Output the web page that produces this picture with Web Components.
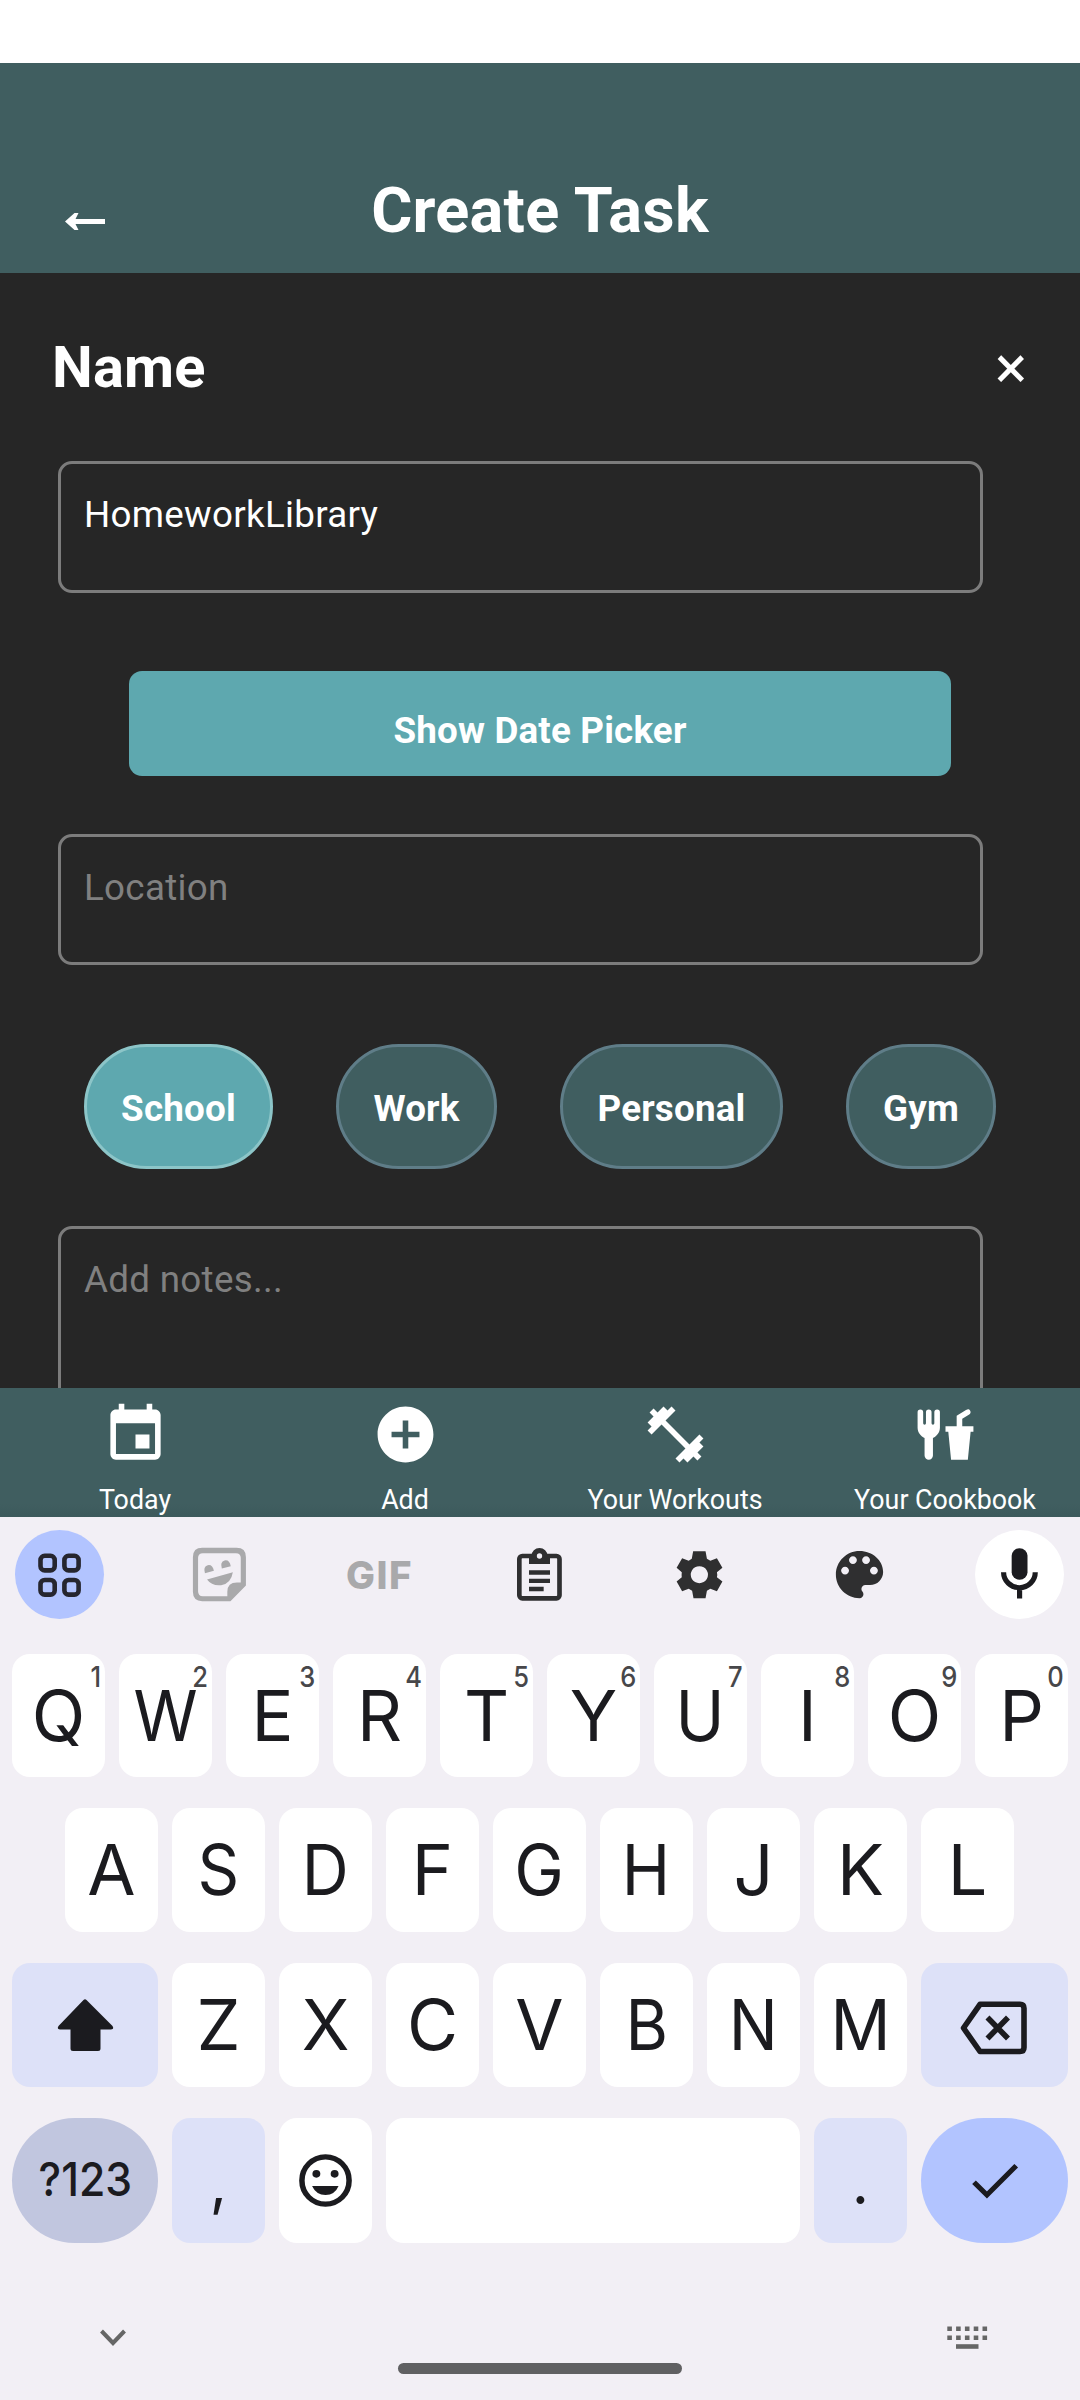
<!DOCTYPE html>
<html lang="en">
<head>
<meta charset="utf-8">
<title>Create Task</title>
<style>
html,body{margin:0;padding:0;background:#fff}
body{width:1080px;height:2400px;overflow:hidden;font-family:Roboto,sans-serif}
</style>
</head>
<body>
<task-screen></task-screen>
<script>
const define = (name, html, setup) => customElements.define(name, class extends HTMLElement {
  connectedCallback() {
    if (this.shadowRoot) return;
    const root = this.attachShadow({mode: 'open'});
    const t = document.createElement('template');
    t.innerHTML = html;
    root.append(t.content.cloneNode(true));
    if (setup) setup(this, root);
  }
});

define('app-header', `
<style>
:host{display:grid;grid-template-columns:170px 1fr 170px;height:210px;box-sizing:border-box;padding-top:110px;background:#405e60;color:#fff}
svg{display:block;margin:38px 0 0 65px}
h1{margin:0;font-size:63px;line-height:75px;font-weight:700;text-align:center;white-space:nowrap;letter-spacing:.25px}
</style>
<svg width="40" height="20" viewBox="0 0 40 20" role="img" aria-label="Back"><path fill="#fff" d="M0 10.5 9.5 2H13.5L10.5 8H40V13H10.5L13.5 19H9.5Z"/></svg>
<h1><slot></slot></h1>`);

define('text-field', `
<style>
:host{display:block;box-sizing:border-box;width:925px;height:var(--h,132px);margin-left:58px;flex:none;border:3px solid #7c7c7c;border-radius:14px;padding:29px 21px 0 23px;font-size:36.75px;letter-spacing:.3px;line-height:43px;color:#fff}
:host([empty]){color:#808080}
</style><slot></slot>`);

define('primary-button', `
<style>
:host{display:flex;align-items:center;justify-content:center;box-sizing:border-box;width:822px;height:105px;margin-left:129px;flex:none;padding-top:14px;background:#5ea8af;border-radius:13px;color:#fff;font-weight:700;font-size:36.75px;letter-spacing:.18px;line-height:43px}
</style><slot></slot>`);

define('category-chip', `
<style>
:host{display:flex;align-items:center;justify-content:center;box-sizing:border-box;width:var(--w);height:125px;padding-top:4px;background:#405e60;border:3px solid #5f7d88;border-radius:63px;color:#fff;font-weight:700;font-size:36.75px;letter-spacing:.2px;line-height:43px}
:host([selected]){background:#5ea8af;border-color:#8cc5c8}
</style><slot></slot>`);

define('task-form', `
<style>
:host{display:flex;flex-direction:column;height:1115px;box-sizing:border-box;padding-top:60px;background:#262626;overflow:hidden}
.title{display:flex;justify-content:space-between;align-items:center;height:68px;flex:none;padding:0 53px 0 52px;margin-bottom:60px;color:#fff}
h2{margin:0;font-size:57.75px;line-height:68px;font-weight:700;letter-spacing:.2px}
.close{font-size:60px;line-height:68px;font-weight:400;margin-top:1px}
.chips{display:flex;gap:63px;padding-left:84px;flex:none;margin:79px 0 57px}
primary-button{margin-top:78px;margin-bottom:58px}
</style>
<div class="title"><h2>Name</h2><span class="close">×</span></div>
<text-field>HomeworkLibrary</text-field>
<primary-button>Show Date Picker</primary-button>
<text-field empty style="--h:131px">Location</text-field>
<div class="chips">
<category-chip selected style="--w:189px">School</category-chip>
<category-chip style="--w:161px">Work</category-chip>
<category-chip style="--w:223px">Personal</category-chip>
<category-chip style="--w:150px">Gym</category-chip>
</div>
<text-field empty style="--h:262px">Add notes...</text-field>`);

const navIcons = {
  today: 'M17 12h-5v5h5v-5zM16 1v2H8V1H6v2H5c-1.11 0-1.99.9-1.99 2L3 19c0 1.1.89 2 2 2h14c1.1 0 2-.9 2-2V5c0-1.1-.9-2-2-2h-1V1h-2zm3 18H5V8h14v11z',
  add: 'M12 2C6.48 2 2 6.48 2 12s4.48 10 10 10 10-4.48 10-10S17.52 2 12 2zm5 11h-4v4h-2v-4H7v-2h4V7h2v4h4v2z',
  workouts: 'M20.57 14.86L22 13.43 20.57 12 17 15.57 8.43 7 12 3.43 10.57 2 9.14 3.43 7.71 2 5.57 4.14 4.14 2.71 2.71 4.14l1.43 1.43L2 7.71l1.43 1.43L2 10.57 3.43 12 7 8.43 15.57 17 12 20.57 13.43 22l1.43-1.43L16.29 22l2.14-2.14 1.43 1.43 1.43-1.43-1.43-1.43L22 16.29z',
  cookbook: 'M3,3A1,1 0 0,0 2,4V8L2,9.5C2,11.19 3.03,12.63 4.5,13.22V19.5A1.5,1.5 0 0,0 6,21A1.5,1.5 0 0,0 7.5,19.5V13.22C8.97,12.63 10,11.19 10,9.5V8L10,4A1,1 0 0,0 9,3A1,1 0 0,0 8,4V8A0.5,0.5 0 0,1 7.5,8.5A0.5,0.5 0 0,1 7,8V4A1,1 0 0,0 6,3A1,1 0 0,0 5,4V8A0.5,0.5 0 0,1 4.5,8.5A0.5,0.5 0 0,1 4,8V4A1,1 0 0,0 3,3M19.88,3C19.75,3 19.62,3.09 19.5,3.16L16,5.25V9H12V11H13L14,21H20L21,11H22V9H18V6.34L20.5,4.84C21,4.56 21.13,4 20.84,3.5C20.63,3.14 20.26,2.95 19.88,3Z'
};
define('nav-item', `
<style>
:host{display:flex;flex-direction:column;align-items:center;flex:1;padding-top:12.5px;color:#fff;font-size:26.8px;line-height:32px;white-space:nowrap}
svg{display:block;margin-bottom:16px}
</style>
<svg width="67" height="67" viewBox="0 0 24 24"><path fill="#fff"/></svg><span><slot></slot></span>`,
(el, root) => root.querySelector('path').setAttribute('d', navIcons[el.getAttribute('icon')]));

define('bottom-nav', `
<style>
:host{display:flex;height:129px;background:linear-gradient(#405e60 0,#405e60 116px,#3c595b 129px)}
</style>
<nav-item icon="today">Today</nav-item>
<nav-item icon="add">Add</nav-item>
<nav-item icon="workouts">Your Workouts</nav-item>
<nav-item icon="cookbook">Your Cookbook</nav-item>`);

define('tool-button', `
<style>
:host{display:flex;align-items:center;justify-content:center;width:89px;height:89px;border-radius:50%;background:var(--bg,none);color:#a9a9ab;font:800 38.5px/46px Inter,sans-serif;letter-spacing:1.5px}
</style><slot></slot>`);

define('key-toolbar', `
<style>
:host{display:flex;justify-content:space-between;padding:13px 16px 35px 15px}
svg{display:block}
</style>
<tool-button style="--bg:#b2c4ff">
 <svg width="89" height="89" viewBox="0 0 89 89" fill="none" stroke="#26262f" stroke-width="4.6"><rect x="25.5" y="25.8" width="14.2" height="14.6" rx="4.2"/><rect x="49.4" y="25.8" width="14.2" height="14.6" rx="4.2"/><rect x="25.5" y="50" width="14.2" height="14.6" rx="4.2"/><rect x="49.4" y="50" width="14.2" height="14.6" rx="4.2"/></svg>
</tool-button>
<tool-button>
 <svg width="89" height="89" viewBox="508 59.5 258.5 267" preserveAspectRatio="none" fill="#a9a9ab"><path fill-rule="evenodd" d="M587 113H687Q714 113 714 141V226L669 273H587Q560 273 560 245V141Q560 113 587 113ZM589 129Q575 129 575 143V243Q575 258 589 258H660V245Q660 217 688 217H699V143Q699 129 685 129Z"/><path d="M595 189Q589 169 603 165 617 162 621 182ZM644 175Q638 155 652 151 666 148 670 168ZM601 208 676 186Q671 220 642 225 615 228 601 208Z"/></svg>
</tool-button>
<tool-button>GIF</tool-button>
<tool-button>
 <svg width="89" height="89" viewBox="15 0 267 267" fill="none" stroke="#2f2f30"><rect x="88" y="78" width="120.500" height="127" rx="9" stroke-width="14"/><path stroke="none" fill="#2f2f30" d="M117 75H180V102H117Z"/><circle cx="148.500" cy="78" r="16" stroke-width="16" fill="#f2eff5"/><path stroke-width="13" d="M117 127.500H180M117 152.500H180M117 177H161"/></svg>
</tool-button>
<tool-button>
 <svg width="89" height="89" viewBox="334.200 59.5 258.5 267" preserveAspectRatio="none" fill="#2f2f30"><path fill-rule="evenodd" d="M445 123H481L485 146 495 152 514 144 530 173 514 186Q516 193 514 201L530 214 514 243 495 236 485 242 481 264H446L442 242 432 236 413 243 397 214 412 201Q411 193 412 186L397 173 413 144 432 152 441 146ZM463 168A25 25.500 0 1 0 463.100 168Z"/></svg>
</tool-button>
<tool-button>
 <svg width="63" height="63" viewBox="0 0 24 24" fill="#2f2f30"><path d="M12 3c-4.970 0-9 4.030-9 9s4.030 9 9 9c.83 0 1.500-.67 1.500-1.500 0-.39-.15-.74-.39-1.010-.23-.26-.38-.61-.38-.99 0-.83.67-1.500 1.500-1.500H16c2.760 0 5-2.240 5-5 0-4.420-4.030-8-9-8zm-5.500 9c-.83 0-1.500-.67-1.500-1.500S5.670 9 6.500 9 8 9.670 8 10.500 7.330 12 6.500 12zm3-4C8.670 8 8 7.330 8 6.500S8.670 5 9.500 5s1.500.67 1.500 1.500S10.330 8 9.500 8zm5 0c-.83 0-1.500-.67-1.500-1.500S13.670 5 14.500 5s1.500.67 1.500 1.500S15.330 8 14.500 8zm3 4c-.83 0-1.500-.67-1.500-1.500S16.670 9 17.500 9s1.500.67 1.500 1.500-.67 1.500-1.500 1.500z"/></svg>
</tool-button>
<tool-button style="--bg:#fff">
 <svg width="89" height="89" viewBox="1263.500 59.5 258.5 267" preserveAspectRatio="none" fill="none" stroke="#1b1b1f" stroke-width="15"><rect x="1370" y="114" width="46" height="95" rx="23" fill="#1b1b1f" stroke="none"/><path d="M1346.500 186A46 46.500 0 0 0 1438.500 186M1393 232V265"/></svg>
</tool-button>`);

define('key-cap', `
<style>
:host{display:flex;align-items:center;justify-content:center;position:relative;width:var(--w,93px);height:100%;flex:none;border-radius:18px;background:#fff;color:#1b1b1f;font:400 70px/84px Inter,sans-serif}
:host([tone=soft]){background:#dde1f8}
:host([tone=mode]){background:#c1c6df;border-radius:63px;font:500 47px/56px Inter,sans-serif}
:host([tone=enter]){background:#b2c4ff;border-radius:63px}
.face{display:inline-block;transform:scaleX(var(--sx,1))}
.hint{position:absolute;top:8px;right:4px;font:500 29px/30px Inter,sans-serif;color:#47474a;transform:scaleX(.88);transform-origin:right}
</style>
<span class="face"><slot></slot></span>`,
(el, root) => {
  const hint = el.getAttribute('hint');
  if (hint) {
    const s = document.createElement('span');
    s.className = 'hint';
    s.textContent = hint;
    root.append(s);
  }
});

define('key-row', `
<style>
:host{display:flex;gap:14px;height:124px;margin-bottom:31px;padding:0 12px;flex:none;box-sizing:border-box}
</style><slot></slot>`);

const stretch = {W: .93, M: .95, S: .93, B: .93, N: .93, H: .93, D: .93, U: .94, G: .95};
const caps = (letters, hints = '') => [...letters].map((c, i) =>
  `<key-cap${hints ? ` hint="${hints[i]}"` : ''} style="--sx:${stretch[c] || 1}">${c}</key-cap>`).join('');

define('key-board', `
<style>
:host{display:block;height:883px;background:#f2eff5}
svg{display:block}
.system{display:flex;justify-content:space-between;height:23px;margin-top:83px;padding:0 92px 0 100px}
.home{width:284px;height:11px;border-radius:6px;background:#606062;margin:14px auto 0}
</style>
<key-toolbar></key-toolbar>
<key-row style="height:123px">${caps('QWERTYUIOP', '1234567890')}</key-row>
<key-row style="padding-left:65px">${caps('ASDFGHJKL')}</key-row>
<key-row>
<key-cap tone="soft" style="--w:146px"><svg width="146" height="124" viewBox="0 0 146 124"><path fill="#1b1b1f" d="M71.500 37Q73 35.500 74.500 37L100.500 63Q102.500 66.500 99 66.500H88.500V85.500Q88.500 88 86 88H61Q58.500 88 58.500 85.500V66.500H48Q44.500 66.500 46.500 63Z"/></svg></key-cap>${caps('ZXCVBNM')}<key-cap tone="soft" style="--w:147px"><svg width="147" height="124" viewBox="0 0 147 124" fill="none" stroke="#1b1b1f" stroke-width="5.600" stroke-linejoin="round"><path d="M59 41.300H99Q103 41.300 103 45.300V84.500Q103 88.500 99 88.500H59L42.500 65Z"/><path d="M66.500 54.500 87 75.500M87 54.500 66.500 75.500"/></svg></key-cap>
</key-row>
<key-row style="height:125px;margin:0">
<key-cap tone="mode" style="--w:146px;--sx:.91;padding-bottom:3px;box-sizing:border-box">?123</key-cap>
<key-cap tone="soft" style="font-size:60px;padding-top:2px;box-sizing:border-box">,</key-cap>
<key-cap><svg width="93" height="125" viewBox="810 84 270 375" preserveAspectRatio="none" fill="#1b1b1f"><ellipse cx="945" cy="271.500" rx="68.500" ry="71" fill="none" stroke="#1b1b1f" stroke-width="16"/><circle cx="918.500" cy="251.500" r="11.500"/><circle cx="971.500" cy="251.500" r="11.500"/><path d="M906 288H983Q972 315 945 315T906 288Z"/></svg></key-cap>
<key-cap style="--w:414px"></key-cap>
<key-cap tone="soft" style="font-size:60px;padding-top:2px;box-sizing:border-box">.</key-cap>
<key-cap tone="enter" style="--w:147px"><svg width="147" height="125" viewBox="1106 84 427 375" preserveAspectRatio="none" fill="none" stroke="#1b1b1f" stroke-width="15"><path d="M1260 277 1297.500 315 1382.500 227"/></svg></key-cap>
</key-row>
<div class="system">
<svg width="26" height="23" viewBox="0 0 26 23" fill="none" stroke="#666" stroke-width="4"><path d="M1.500 5 13 17 24.500 5"/></svg>
<svg width="41" height="23" viewBox="0 0 41 23"><path stroke="#666" stroke-width="4.600" fill="none" stroke-dasharray="4.600 4.200" d="M.300 2.800H41M.300 11.700H41"/><path fill="#666" d="M9 18.200H31.500V22.800H9Z"/></svg>
</div>
<div class="home"></div>`);

define('task-screen', `
<style>
:host{display:flex;flex-direction:column;width:1080px;height:2400px;box-sizing:border-box;padding-top:63px;background:#fff}
</style>
<app-header>Create Task</app-header>
<task-form></task-form>
<bottom-nav></bottom-nav>
<key-board></key-board>`);
</script>
</body>
</html>
